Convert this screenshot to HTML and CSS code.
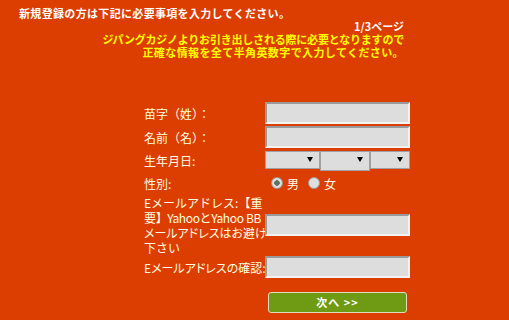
FILE: index.html
```html
<!DOCTYPE html>
<html lang="ja">
<head>
<meta charset="utf-8">
<link rel="stylesheet" href="styles.css">
</head>
<body>
<div class="header">
  <div class="title">新規登録の方は下記に必要事項を入力してください。</div>
  <div class="page">1/3ページ</div>
  <div class="note n1">ジパングカジノよりお引き出しされる際に必要となりますので</div>
  <div class="note n2">正確な情報を全て半角英数字で入力してください。</div>
</div>
<form class="form">
  <label class="lbl">苗字（姓）：</label>
  <div class="field"><input class="txt" type="text"></div>

  <label class="lbl">名前（名）：</label>
  <div class="field"><input class="txt" type="text"></div>

  <label class="lbl">生年月日:</label>
  <div class="field dates">
    <div class="sel s1"><select></select><span class="arrow"></span></div>
    <div class="sel s2"><select></select><span class="arrow"></span></div>
    <div class="sel s3"><select></select><span class="arrow"></span></div>
  </div>

  <label class="lbl">性別:</label>
  <div class="field radios">
    <span class="radio on"></span><span class="rtext">男</span>
    <span class="radio second"></span><span class="rtext">女</span>
  </div>

  <label class="lbl">Eメールアドレス:【重<br><span class="tight">要】YahooとYahoo BB</span><br><span class="prop">メールアドレスはお避け</span><br>下さい</label>
  <div class="field"><input class="txt" type="text"></div>

  <label class="lbl prop">Eメールアドレスの確認:</label>
  <div class="field"><input class="txt" type="text"></div>
</form>
<div class="actions">
  <button class="next" type="button">次へ &gt;&gt;</button>
</div>
</body>
</html>
```
FILE: styles.css
```css
html, body {
  margin: 0;
  padding: 0;
}
body {
  background: #dc3d00;
  font-family: "Noto Sans CJK JP", "Noto Sans", sans-serif;
  width: 509px;
  height: 320px;
  overflow: hidden;
}
.header {
  margin-left: 19px;
  width: 385px;
  padding-top: 7px;
  font-size: 11px;
  line-height: 13px;
  font-weight: bold;
}
.title {
  color: #ffffff;
  text-align: left;
  letter-spacing: 0.33px;
}
.page {
  color: #ffffff;
  text-align: right;
}
.note {
  color: #ffff00;
  text-align: right;
}
.n1 {
  letter-spacing: -0.2px;
}
.n2 {
  letter-spacing: 0.4px;
}
.form {
  margin: 42px 0 0 144px;
  display: grid;
  grid-template-columns: 121px 145px;
  grid-template-rows: 24px 24px 23px 22px 62px 22px;
  align-items: center;
}
.lbl {
  color: #ffffe0;
  font-size: 12px;
  line-height: 15px;
  white-space: nowrap;
}
.prop {
  font-feature-settings: "palt";
}
.tight {
  letter-spacing: -0.35px;
}
.field {
  display: flex;
  align-items: center;
}
.txt {
  box-sizing: border-box;
  width: 145px;
  height: 22px;
  margin: 0;
  padding: 0 2px;
  background: #dddddd;
  border-style: solid;
  border-width: 2px;
  border-color: #9a9a9a #f2f2f2 #f2f2f2 #9a9a9a;
  outline: none;
}
.dates {
  align-self: start;
  align-items: flex-start;
  margin-top: 2px;
}
.sel {
  position: relative;
  box-sizing: border-box;
  height: 18px;
}
.sel select {
  display: block;
  appearance: none;
  -webkit-appearance: none;
  box-sizing: border-box;
  width: 100%;
  height: 100%;
  margin: 0;
  padding: 0;
  background: #dddddd;
  border: 1px solid #a0a0a0;
  border-radius: 0;
}
.s1 { width: 55px; }
.s2 { width: 50px; height: 20px; }
.s3 { width: 40px; }
.arrow {
  position: absolute;
  right: 7px;
  top: 6px;
  width: 0;
  height: 0;
  border-left: 3px solid transparent;
  border-right: 3px solid transparent;
  border-top: 5px solid #000;
}
.radios {
  height: 22px;
}
.radio {
  box-sizing: border-box;
  width: 12px;
  height: 12px;
  border-radius: 50%;
  border: 1px solid #9a9a9a;
  background: #dedede;
  margin-left: 6px;
}
.radio.on {
  background: radial-gradient(circle, #5f6f60 0 2.5px, #dedede 3px);
}
.radio.second {
  margin-left: 9px;
}
.rtext {
  color: #ffffe0;
  font-size: 12px;
  margin-left: 4px;
}
.actions {
  display: flex;
  margin: 14px 0 0 268px;
}
.next {
  box-sizing: border-box;
  width: 139px;
  height: 21px;
  margin: 0;
  padding: 0;
  background: #6e9a14;
  border: 1px solid #e0dcc0;
  border-radius: 3px;
  color: #ffffff;
  font-family: "Noto Sans CJK JP", "Noto Sans", sans-serif;
  font-size: 11px;
  font-weight: bold;
  line-height: 19px;
  letter-spacing: 1px;
}
```
